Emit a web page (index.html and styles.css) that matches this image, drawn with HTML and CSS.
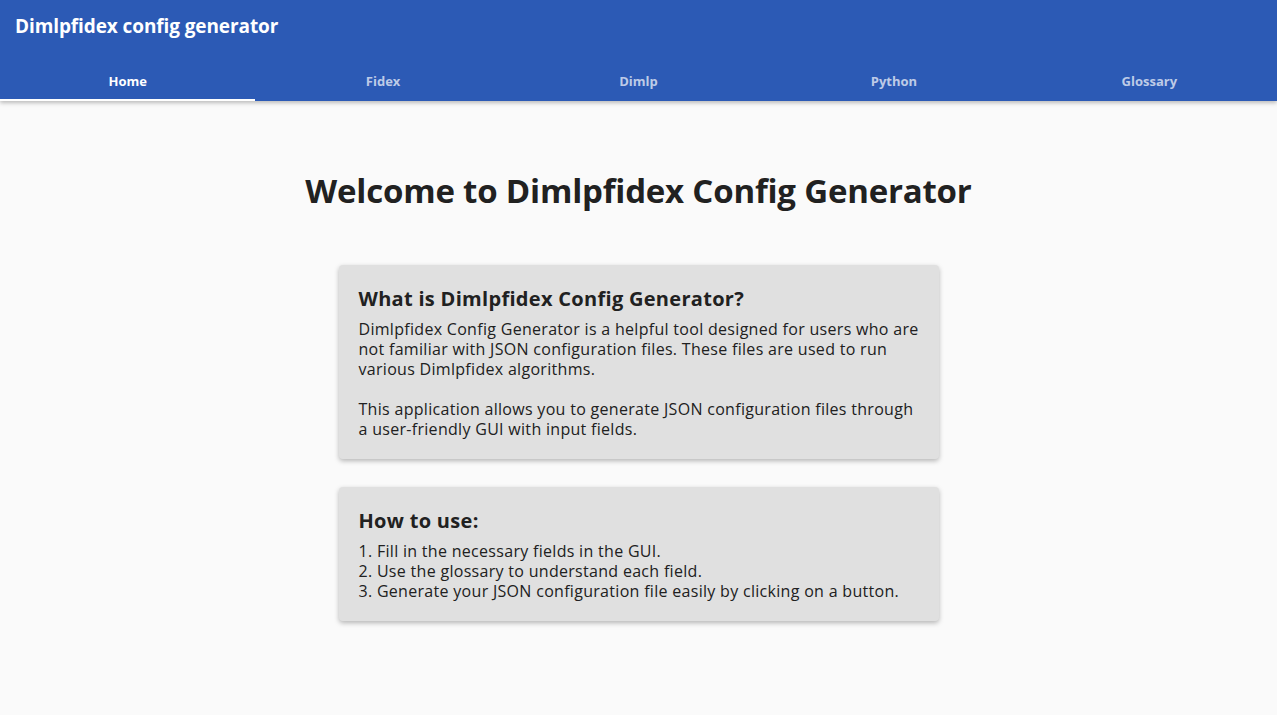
FILE: index.html
```html
<!DOCTYPE html>
<html lang="en">
<head>
<meta charset="utf-8">
<title>Dimlpfidex config generator</title>
<link rel="stylesheet" href="styles.css">
</head>
<body>
<header class="appbar">
  <div class="toolbar">Dimlpfidex config generator</div>
  <nav class="tabs">
    <a class="tab active">Home</a>
    <a class="tab">Fidex</a>
    <a class="tab">Dimlp</a>
    <a class="tab">Python</a>
    <a class="tab">Glossary</a>
  </nav>
</header>
<main class="content">
  <h1 class="title">Welcome to Dimlpfidex Config Generator</h1>
  <section class="card">
    <h2 class="card-title">What is Dimlpfidex Config Generator?</h2>
    <p class="card-text">Dimlpfidex Config Generator is a helpful tool designed for users who are not familiar with JSON configuration files. These files are used to run various Dimlpfidex algorithms.</p>
    <p class="card-text gap">This application allows you to generate JSON configuration files through a user-friendly GUI with input fields.</p>
  </section>
  <section class="card">
    <h2 class="card-title">How to use:</h2>
    <p class="card-text">1. Fill in the necessary fields in the GUI.<br>2. Use the glossary to understand each field.<br>3. Generate your JSON configuration file easily by clicking on a button.</p>
  </section>
</main>
</body>
</html>
```
FILE: styles.css
```css
* { box-sizing: border-box; }
html, body { margin: 0; padding: 0; }
body {
  background: #fafafa;
  font-family: "Open Sans", "Noto Sans", sans-serif;
  color: #212121;
  min-height: 715px;
}
.appbar {
  background: #2c5ab5;
  color: #fff;
  box-shadow: 0 2px 4px rgba(0,0,0,0.25);
  position: relative;
}
.toolbar {
  height: 53px;
  display: flex;
  align-items: center;
  padding: 0 15px 2px;
  font-size: 19px;
  font-weight: 700;
  letter-spacing: -0.1px;
}
.tabs {
  display: flex;
  height: 48px;
}
.tab {
  flex: 1;
  display: flex;
  align-items: center;
  justify-content: center;
  font-size: 13px;
  font-weight: 700;
  color: rgba(255,255,255,0.7);
  border-bottom: 2px solid transparent;
  padding-top: 10px;
}
.tab.active {
  color: #fff;
  border-bottom-color: #fff;
}
.content {
  display: flex;
  flex-direction: column;
  align-items: center;
  padding-top: 70px;
}
.title {
  margin: 0 0 54px;
  font-size: 33px;
  font-weight: 700;
  line-height: 40px;
  letter-spacing: -0.2px;
}
.card {
  width: 600px;
  background: #e0e0e0;
  border-radius: 4px;
  box-shadow: 0 2px 5px rgba(0,0,0,0.28);
  padding: 20px 20px 20px;
  margin-bottom: 28px;
}
.card-title {
  margin: 0 0 6px;
  font-size: 20px;
  font-weight: 700;
  line-height: 28px;
  letter-spacing: 0.3px;
}
.card-text {
  margin: 0;
  font-size: 16px;
  line-height: 20px;
  letter-spacing: 0.3px;
}
.card-text.gap { margin-top: 20px; }
```
